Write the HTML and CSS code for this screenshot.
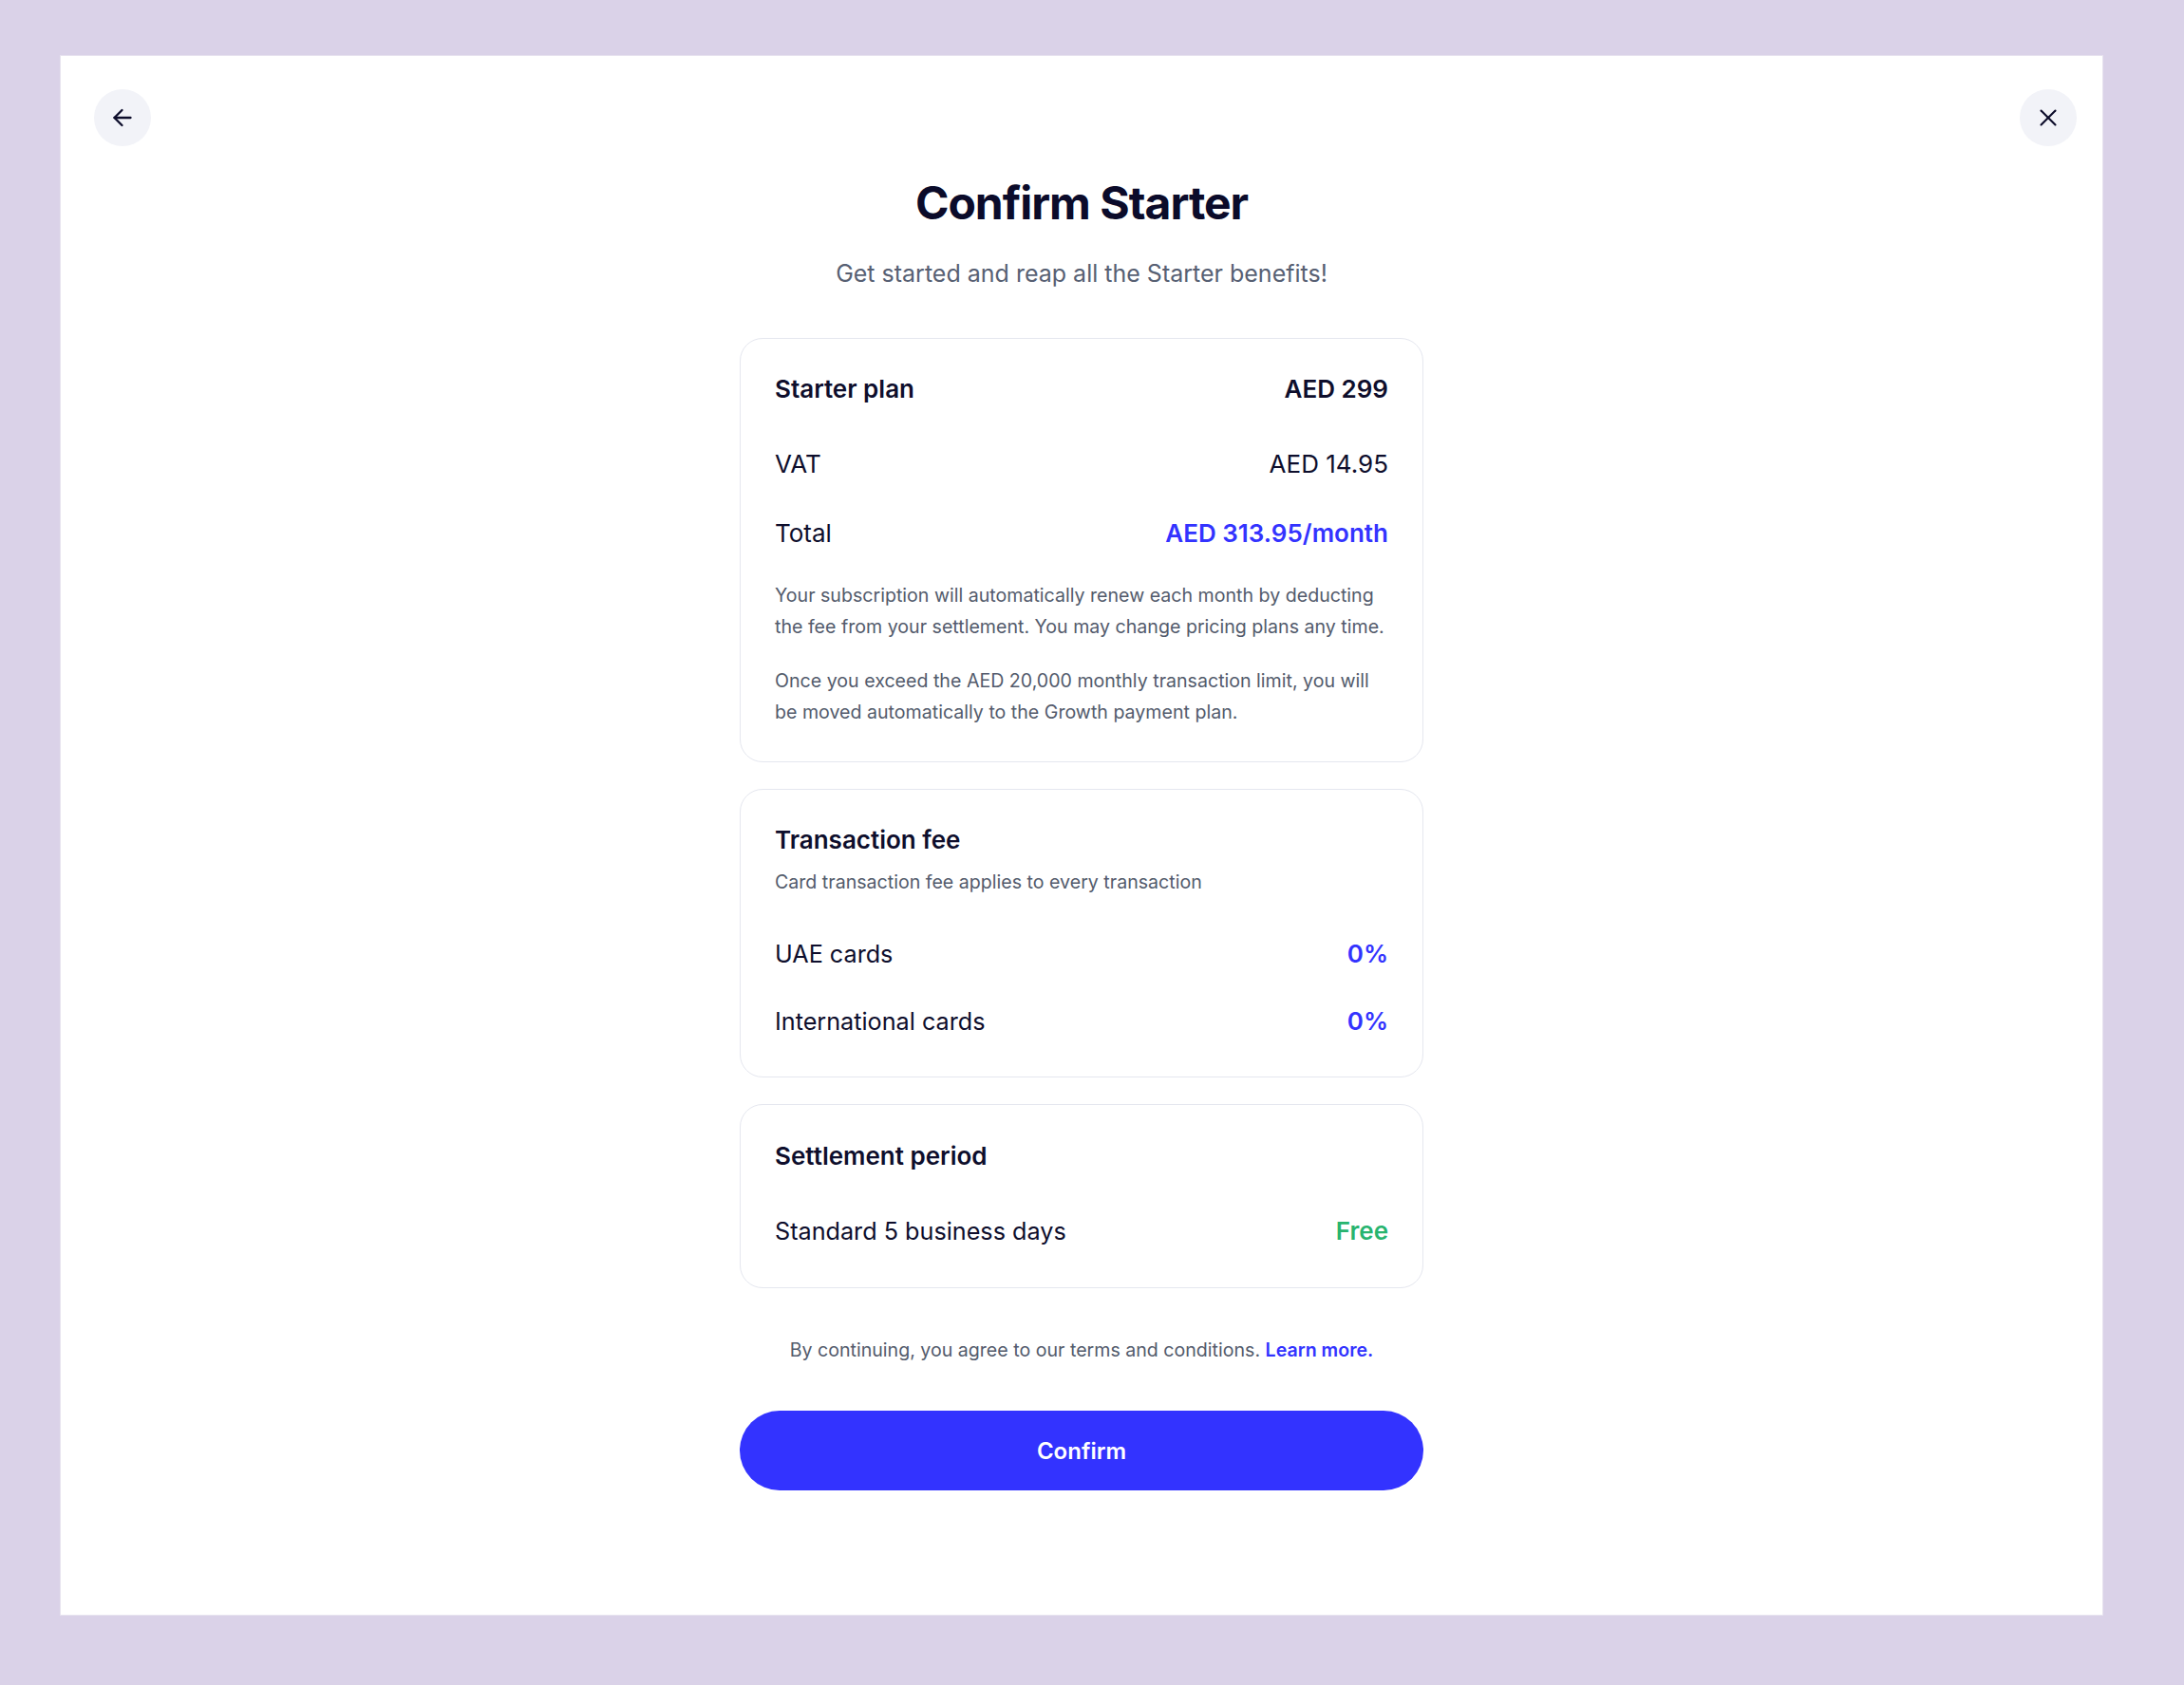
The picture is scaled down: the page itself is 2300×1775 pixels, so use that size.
FILE: index.html
```html
<!DOCTYPE html>
<html lang="en">
<head>
<meta charset="utf-8">
<title>Confirm Starter</title>
<link rel="stylesheet" href="styles.css">
</head>
<body>
<div class="panel">
  <div class="topbar">
    <button class="icon-btn" aria-label="Back">
      <svg width="24" height="24" viewBox="0 0 24 24" fill="none" stroke="#0d0d2b" stroke-width="2.3" stroke-linecap="round" stroke-linejoin="round"><path d="M20.5 12H3.5"/><path d="M11.5 4L3.5 12l8 8"/></svg>
    </button>
    <button class="icon-btn" aria-label="Close">
      <svg width="20" height="20" viewBox="0 0 20 20" fill="none" stroke="#0d0d2b" stroke-width="2.1" stroke-linecap="round"><path d="M2.5 2.5l15 15"/><path d="M17.5 2.5l-15 15"/></svg>
    </button>
  </div>
  <main class="content">
    <h1 class="title">Confirm Starter</h1>
    <p class="subtitle">Get started and reap all the Starter benefits!</p>

    <section class="card card-plan">
      <div class="row head"><span>Starter plan</span><span>AED 299</span></div>
      <div class="row r-vat"><span>VAT</span><span>AED 14.95</span></div>
      <div class="row r-total"><span class="big">Total</span><span class="blue strong">AED 313.95/month</span></div>
      <p class="note n1">Your subscription will automatically renew each month by deducting the fee from your settlement. You may change pricing plans any time.</p>
      <p class="note n2">Once you exceed the AED 20,000 monthly transaction limit, you will be moved automatically to the Growth payment plan.</p>
    </section>

    <section class="card card-fee">
      <div class="row head"><span>Transaction fee</span></div>
      <p class="sub">Card transaction fee applies to every transaction</p>
      <div class="row r-uae"><span class="label">UAE cards</span><span class="blue strong">0%</span></div>
      <div class="row r-intl"><span class="label">International cards</span><span class="blue strong">0%</span></div>
    </section>

    <section class="card card-settle">
      <div class="row head"><span>Settlement period</span></div>
      <div class="row r-std"><span class="label">Standard 5 business days</span><span class="green strong">Free</span></div>
    </section>

    <p class="terms">By continuing, you agree to our terms and conditions. <a href="#" class="learn">Learn more.</a></p>

    <button class="confirm">Confirm</button>
  </main>
</div>
</body>
</html>
```

FILE: styles.css
```css
* { box-sizing: border-box; }
html, body { margin: 0; padding: 0; }
body {
  background: #dad2e8;
  padding: 58px 85px 73px 63px;
  font-family: "Inter", "Lato", sans-serif;
  color: #0e0e2c;
  height: 1775px;
}
.panel {
  background: #ffffff;
  height: 1644px;
  border: 1px solid #e7e3ef;
  display: flex;
  flex-direction: column;
}
.topbar {
  display: flex;
  justify-content: space-between;
  padding: 35px 27px 0 35px;
}
.icon-btn {
  width: 60px;
  height: 60px;
  border-radius: 50%;
  border: none;
  background: #f2f3f8;
  display: flex;
  align-items: center;
  justify-content: center;
  padding: 0;
  cursor: pointer;
}
.content {
  width: 720px;
  margin: 0 auto;
  display: flex;
  flex-direction: column;
  align-items: stretch;
}
.title {
  margin: 31px 0 0;
  font-size: 48px;
  line-height: 58px;
  font-weight: 700;
  letter-spacing: -1px;
  text-align: center;
  color: #0b0b2a;
}
.subtitle {
  margin: 29px 0 0;
  font-size: 25px;
  line-height: 32px;
  text-align: center;
  color: #576073;
}
.card {
  border: 1px solid #e5e7ef;
  border-radius: 24px;
  padding: 35px 36px 40px;
}
.card-plan { margin-top: 52px; padding-bottom: 35px; }
.card-fee { margin-top: 28px; }
.card-settle { margin-top: 28px; padding-top: 36px; padding-bottom: 41px; }
.row {
  display: flex;
  justify-content: space-between;
  align-items: baseline;
  font-size: 26px;
  line-height: 36px;
}
.row.head { font-weight: 600; }
.label { font-size: 25.2px; }
.strong { font-weight: 600; }
.blue { color: #3333ff; }
.green { color: #27b46f; }
.r-vat { margin-top: 43px; }
.r-total { margin-top: 37px; }
.note {
  margin: 0;
  font-size: 19.6px;
  line-height: 33px;
  color: #535b6c;
}
.n1 { margin-top: 31px; }
.n2 { margin-top: 24px; }
.sub {
  margin: 12px 0 0;
  font-size: 19.6px;
  line-height: 28px;
  color: #535b6c;
}
.r-uae { margin-top: 44px; }
.r-intl { margin-top: 35px; }
.r-std { margin-top: 43px; }
.terms {
  margin: 51px 0 0;
  font-size: 19.6px;
  line-height: 28px;
  text-align: center;
  color: #535b6c;
}
.learn {
  color: #3333ff;
  font-weight: 600;
  text-decoration: none;
}
.confirm {
  margin-top: 50px;
  height: 84px;
  border: none;
  border-radius: 42px;
  background: #3333ff;
  color: #ffffff;
  font-family: "Inter", "Lato", sans-serif;
  font-size: 24px;
  font-weight: 600;
  cursor: pointer;
}
```
